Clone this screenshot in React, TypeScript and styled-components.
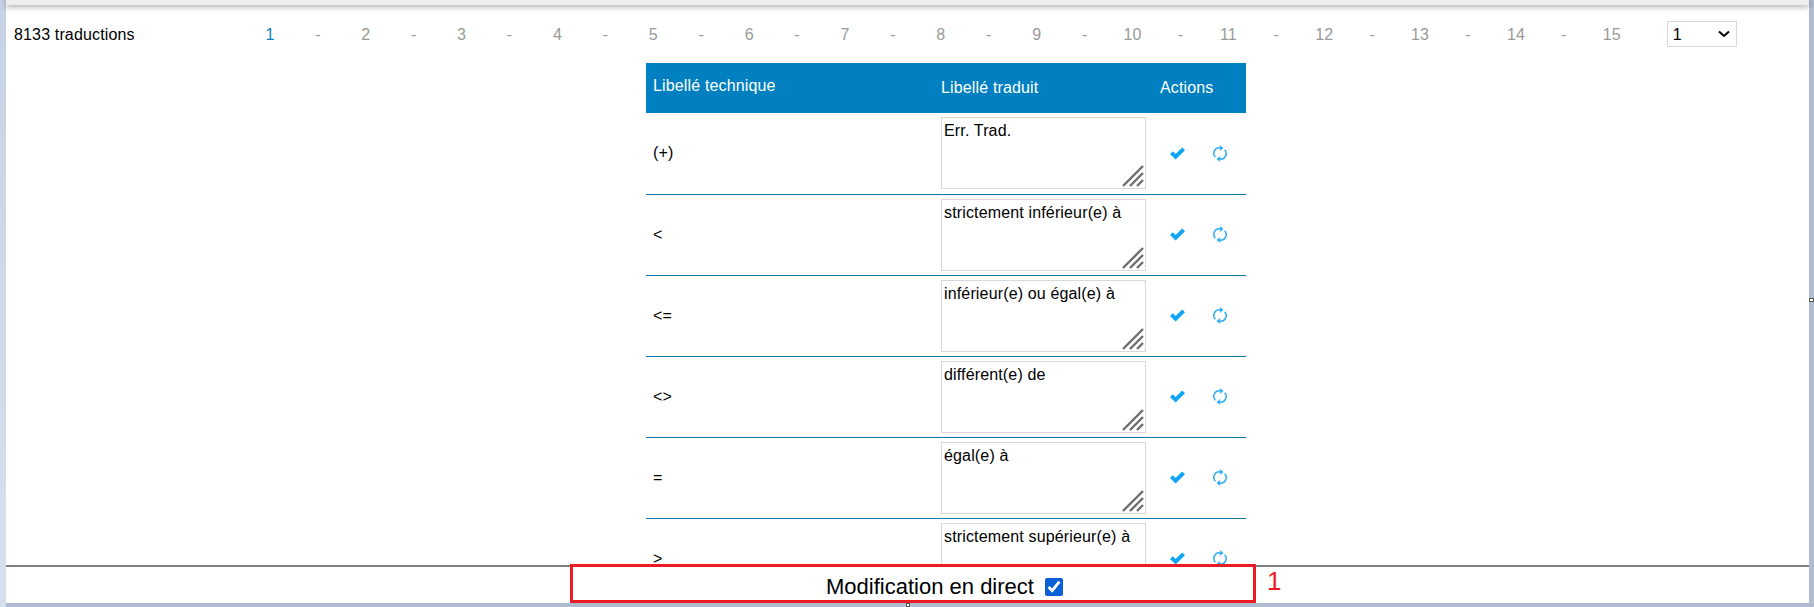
import styled, { createGlobalStyle } from "styled-components";
import { Fragment } from "react";

const rows = [
  { key: "(+)", value: "Err. Trad." },
  { key: "<", value: "strictement inférieur(e) à" },
  { key: "<=", value: "inférieur(e) ou égal(e) à" },
  { key: "<>", value: "différent(e) de" },
  { key: "=", value: "égal(e) à" },
  { key: ">", value: "strictement supérieur(e) à" },
];

const pages = Array.from({ length: 15 }, (_, i) => i + 1);

const chevron =
  "data:image/svg+xml,%3Csvg xmlns='http://www.w3.org/2000/svg' width='12' height='8'%3E%3Cpath d='M1 1.5 L6 6 L11 1.5' fill='none' stroke='%23000' stroke-width='2'/%3E%3C/svg%3E";

const GlobalStyle = createGlobalStyle`
  html, body {
    margin: 0;
    padding: 0;
    overflow: hidden;
  }
  body {
    font-family: "Liberation Sans", Arial, sans-serif;
    font-size: 16px;
    letter-spacing: 0.15px;
    color: #000;
  }
`;

const Page = styled.div`
  position: relative;
  display: flex;
  height: 607px;
  padding-bottom: 4px;
  box-sizing: border-box;
  background: #aebbd0;
`;

const LeftEdge = styled.div`
  width: 6px;
  background: linear-gradient(#c7d2e5, #d6e0ed);
  margin-bottom: -4px;
`;

const RightEdge = styled.div`
  width: 5px;
  margin-top: 8px;
  background: #b0bcd2;
`;

const Main = styled.div`
  flex: 1;
  min-width: 0;
  display: flex;
  flex-direction: column;
  background: #fff;
`;

const TopBar = styled.div`
  height: 5px;
  flex: none;
  background: #eee;
  box-shadow: 0 1px 6px rgba(0, 0, 0, 0.45);
`;

const Content = styled.div`
  flex: 1;
  min-height: 0;
  overflow: hidden;
`;

const Toolbar = styled.div`
  display: flex;
  align-items: center;
  height: 58px;
  padding: 1px 0 0 8px;
  box-sizing: border-box;
`;

const Count = styled.div`
  width: 232px;
  flex: none;
`;

const Pager = styled.div`
  display: flex;
  flex: none;
`;

const PageItem = styled.span<{ $active?: boolean }>`
  width: 47.93px;
  text-align: center;
  color: ${(p) => (p.$active ? "#0a7fc0" : "#999")};
`;

const PageSelect = styled.select`
  margin: 0 0 1px 31px;
  width: 70px;
  height: 26px;
  padding: 0 5px;
  border: 1px solid #d8d8d8;
  border-radius: 0;
  appearance: none;
  background: #fff url("${chevron}") no-repeat right 6px center;
  font-family: inherit;
  font-size: 16px;
  color: #000;
`;

const Table = styled.table`
  width: 600px;
  margin: 0 auto 0 640px;
  border-collapse: collapse;
  table-layout: fixed;
`;

const HeadCell = styled.th<{ $width: number; $raised?: boolean }>`
  width: ${(p) => p.$width}px;
  height: 50px;
  padding: ${(p) => (p.$raised ? "0 7px 5px" : "0 7px")};
  box-sizing: border-box;
  background: #0080c0;
  color: #fff;
  font-weight: normal;
  text-align: left;
`;

const Row = styled.tr`
  border-bottom: 1px solid #1478ad;
`;

const Cell = styled.td`
  height: 81px;
  padding: 0 7px;
  box-sizing: border-box;
  vertical-align: middle;
`;

const EditorBox = styled.div`
  position: relative;
  width: 205px;
  height: 72px;
`;

const Editor = styled.textarea`
  display: block;
  width: 100%;
  height: 100%;
  box-sizing: border-box;
  padding: 3px 2px;
  border: 1px solid #d8d8d8;
  border-radius: 0;
  outline: none;
  resize: none;
  font-family: inherit;
  font-size: 16px;
  letter-spacing: 0.15px;
  line-height: 19px;
  color: #000;
`;

const Grip = styled.svg`
  position: absolute;
  right: 2px;
  bottom: 2px;
  width: 22px;
  height: 22px;
`;

const Actions = styled.div`
  display: flex;
  align-items: center;
  gap: 28px;
  padding-left: 10px;
`;

const Footer = styled.div`
  position: relative;
  flex: none;
  display: flex;
  align-items: center;
  justify-content: center;
  gap: 11px;
  height: 38px;
  padding: 4px 0 0 74px;
  box-sizing: border-box;
  border-top: 2px solid #808080;
  background: #fff;
  font-size: 22px;
  letter-spacing: 0;
`;

const LiveCheckbox = styled.input`
  width: 18px;
  height: 18px;
  margin: 0;
  accent-color: #0b60d8;
`;

const Callout = styled.div`
  position: absolute;
  left: 564px;
  top: -3px;
  width: 686px;
  height: 39px;
  box-sizing: border-box;
  border: 3px solid #ed1c24;
`;

const CalloutNumber = styled.span`
  position: absolute;
  left: 1261px;
  top: -1px;
  color: #ed1c24;
  font-size: 26px;
  line-height: 30px;
`;

const SplitHandle = styled.div`
  position: absolute;
  left: 906px;
  bottom: 0;
  width: 4px;
  height: 4px;
  border: 1px solid #555;
  box-sizing: border-box;
  background: #fff;
`;

const SideHandle = styled.div`
  position: absolute;
  right: 0;
  top: 298px;
  width: 5px;
  height: 4px;
  border: 1px solid #555;
  box-sizing: border-box;
  background: #fff;
`;

const GripIcon = () => (
  <Grip viewBox="0 0 22 22">
    <g stroke="#6e6e6e" strokeWidth="2.4" fill="none">
      <line x1="1" y1="21" x2="21" y2="1" />
      <line x1="8" y1="21" x2="21" y2="8" />
      <line x1="15" y1="21" x2="21" y2="15" />
    </g>
  </Grip>
);

const CheckIcon = () => (
  <svg width="15" height="13" viewBox="0 0 15 13">
    <path d="M0 7 L2.8 4.2 L5.6 7 L12.2 0.4 L15 3.2 L5.6 12.6 Z" fill="#0ea5f5" />
  </svg>
);

const SyncIcon = () => (
  <svg width="14" height="17" viewBox="0 0 14 17" fill="none" stroke="#30aef5" strokeWidth="1.5">
    <path d="M2.4 12.2 A5.5 5.5 0 0 1 7.5 3" />
    <path d="M11.6 4.8 A5.5 5.5 0 0 1 6.5 14" />
    <path d="M7.2 0.6 L10.2 3 L7.2 5.4 Z" fill="#30aef5" strokeWidth="0.5" />
    <path d="M6.8 11.6 L3.8 14 L6.8 16.4 Z" fill="#30aef5" strokeWidth="0.5" />
  </svg>
);

export default function App() {
  return (
    <Page>
      <GlobalStyle />
      <LeftEdge />
      <Main>
        <TopBar />
        <Content>
          <Toolbar>
            <Count>8133 traductions</Count>
            <Pager>
              {pages.map((n) => (
                <Fragment key={n}>
                  <PageItem $active={n === 1}>{n}</PageItem>
                  {n < 15 && <PageItem>-</PageItem>}
                </Fragment>
              ))}
            </Pager>
            <PageSelect defaultValue="1">
              {pages.map((n) => (
                <option key={n} value={n}>
                  {n}
                </option>
              ))}
            </PageSelect>
          </Toolbar>
          <Table>
            <thead>
              <tr>
                <HeadCell $width={288} $raised>
                  Libellé technique
                </HeadCell>
                <HeadCell $width={219}>Libellé traduit</HeadCell>
                <HeadCell $width={93}>Actions</HeadCell>
              </tr>
            </thead>
            <tbody>
              {rows.map((row) => (
                <Row key={row.key}>
                  <Cell>{row.key}</Cell>
                  <Cell>
                    <EditorBox>
                      <Editor defaultValue={row.value} />
                      <GripIcon />
                    </EditorBox>
                  </Cell>
                  <Cell>
                    <Actions>
                      <CheckIcon />
                      <SyncIcon />
                    </Actions>
                  </Cell>
                </Row>
              ))}
            </tbody>
          </Table>
        </Content>
        <Footer>
          Modification en direct
          <LiveCheckbox type="checkbox" defaultChecked />
          <Callout />
          <CalloutNumber>1</CalloutNumber>
        </Footer>
      </Main>
      <RightEdge />
      <SplitHandle />
      <SideHandle />
    </Page>
  );
}
